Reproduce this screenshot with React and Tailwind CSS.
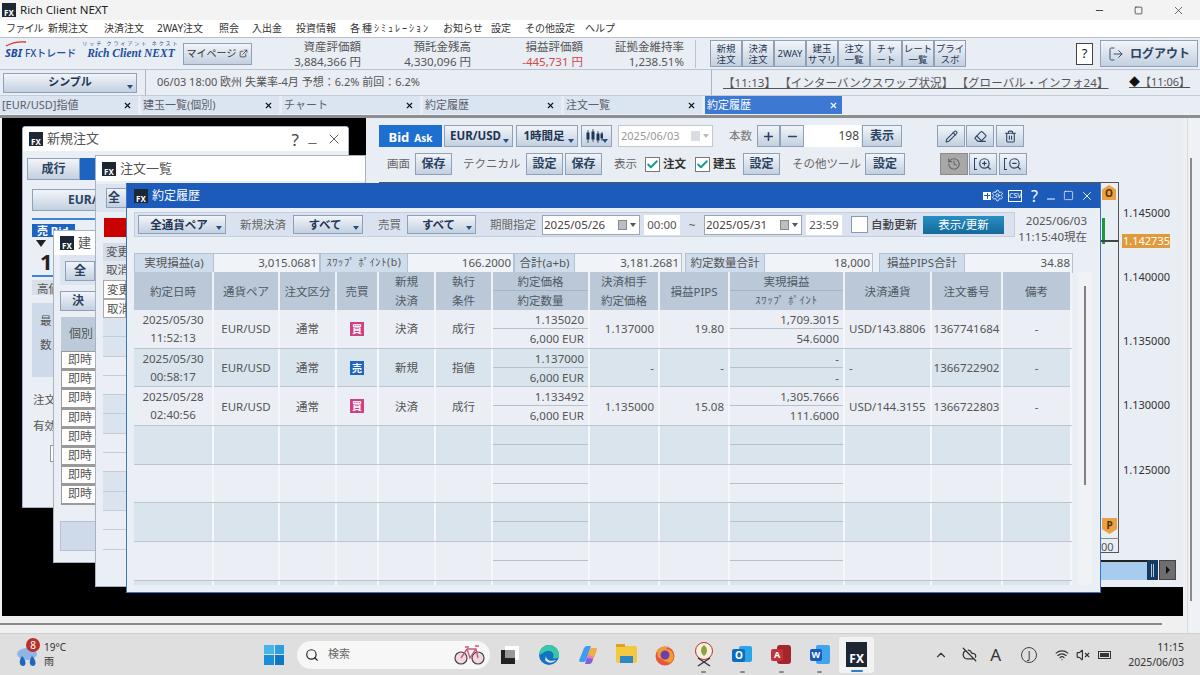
import React from 'react';
import { Search, Wifi, VolumeX, ChevronUp, Pencil, Eraser, Trash2, History, ZoomIn, ZoomOut, CloudOff, LogOut, ExternalLink, Minus, Plus, X, Square, Check, Settings } from 'lucide-react';

const Fx = ({ big }) => (
  <div className={big ? "w-[21px] h-[25px] bg-[#1d2733] text-white flex flex-col items-center justify-end shrink-0 pb-[2px] text-[12px] font-bold leading-none" : "w-[14px] h-[14px] bg-[#1d2733] text-white flex flex-col items-center justify-end shrink-0 text-[8px] font-bold leading-[9px]"}>FX</div>
);

const Btn = ({ className = "", children }) => (
  <div className={"flex items-center justify-center border border-[#8ea1b8] bg-linear-to-b from-[#f2f5f9] to-[#c3d0e0] text-[#2c4463] font-bold text-[12px] shrink-0 overflow-hidden " + className}>{children}</div>
);
const Caret = () => <span className="absolute right-[3px] bottom-[3px] w-0 h-0 border-x-[3px] border-x-transparent border-t-[4px] border-t-[#1f4f8f]" />;
const Drop = ({ className = "", children }) => (
  <div className={"relative flex items-center justify-center border border-[#8ea1b8] bg-linear-to-b from-[#f2f5f9] to-[#c3d0e0] text-[#1f3554] font-bold shrink-0 " + className}>{children}<Caret /></div>
);

const menu = [['ファイル','w-[42px] tracking-[-0.8px]'],['新規注文','w-[56px]'],['決済注文','w-[53px]'],['2WAY注文','w-[62px]'],['照会','w-[33px]'],['入出金','w-[44px]'],['投資情報','w-[54px]'],['各種ｼﾐｭﾚｰｼｮﾝ','w-[93px] tracking-[2px]'],['お知らせ','w-[48px]'],['設定','w-[34px]'],['その他設定','w-[60px]'],['ヘルプ','w-[40px]']];
const quick = [['新規','注文'],['決済','注文'],['2WAY'],['建玉','サマリ'],['注文','一覧'],['チャ','ート'],['レート','一覧'],['プライ','スボ']];
const tabs = ['[EUR/USD]指値','建玉一覧(個別)','チャート','約定履歴','注文一覧'];
const stats = [['資産評価額','3,884,366 円','w-[104px]','text-[#555]'],['預託金残高','4,330,096 円','w-[110px]','text-[#555]'],['損益評価額','-445,731 円','w-[112px]','text-[#d04a4a]'],['証拠金維持率','1,238.51%','w-[101px]','text-[#555]']];

const cols = "grid grid-cols-[80px_66px_57px_42px_57px_57px_97px_70px_70px_115px_87px_71px_69px]";
const rows = [
  ['2025/05/30','11:52:13','EUR/USD','通常','買','決済','成行','1.135020','6,000 EUR','1.137000','19.80','1,709.3015','54.6000','USD/143.8806','1367741684','-'],
  ['2025/05/30','00:58:17','EUR/USD','通常','売','新規','指値','1.137000','6,000 EUR','-','-','-','-','-','1366722902','-'],
  ['2025/05/28','02:40:56','EUR/USD','通常','買','決済','成行','1.133492','6,000 EUR','1.135000','15.08','1,305.7666','111.6000','USD/144.3155','1366722803','-'],
];

const HCell = ({ children }) => <div className="flex items-center justify-center text-center bg-[#bac8d8] border-r-2 border-[#eef1f6] leading-[19px]">{children}</div>;
const HSplit = ({ a, b, small }) => (
  <div className="flex flex-col bg-[#bac8d8] border-r-2 border-[#eef1f6] text-center">
    <div className="h-[19px] leading-[19px] border-b border-[#a5b4c6]">{a}</div>
    <div className={small ? "flex-1 text-[10.5px] tracking-[0.8px] leading-[19px] whitespace-nowrap" : "flex-1 leading-[19px]"}>{b}</div>
  </div>
);
const Cell = ({ children, className = "" }) => <div className={"flex items-center border-r-2 border-[#f5f7fa] " + className}>{children}</div>;
const Split = ({ a, b }) => (
  <div className="flex flex-col border-r-2 border-[#f5f7fa] text-right">
    <div className="h-[19px] leading-[19px] pr-[4px] border-b border-[#b4c0cc]">{a}</div>
    <div className="flex-1 leading-[19px] pr-[4px]">{b}</div>
  </div>
);

const Row = ({ r, i }) => {
  const bg = i % 2 === 0 ? "bg-[#ebeff5]" : "bg-[#d9e4ec]";
  const e = r || Array(16).fill('');
  return (
    <div className={cols + " h-[38.7px] border-b border-[#bcc6d0] " + bg}>
      <Cell className="flex-col justify-center leading-[18px]"><span>{e[0]}</span><span>{e[1]}</span></Cell>
      <Cell className="justify-center">{e[2]}</Cell>
      <Cell className="justify-center">{e[3]}</Cell>
      <Cell className="justify-center">
        {e[4] && <span className={(e[4] === '買' ? "bg-[#cf3f83]" : "bg-[#1f66bd]") + " w-[14px] h-[14px] text-white text-[10px] leading-[14px] text-center font-bold"}>{e[4]}</span>}
      </Cell>
      <Cell className="justify-center">{e[5]}</Cell>
      <Cell className="justify-center">{e[6]}</Cell>
      <Split a={e[7]} b={e[8]} />
      <Cell className="justify-end pr-[4px]">{e[9]}</Cell>
      <Cell className="justify-end pr-[4px]">{e[10]}</Cell>
      <Split a={e[11]} b={e[12]} />
      <Cell className="pl-[4px]">{e[13]}</Cell>
      <Cell className="justify-center">{e[14]}</Cell>
      <Cell className="justify-center">{e[15]}</Cell>
    </div>
  );
};

const Sum = ({ label, value, lw, vw, small }) => (
  <div className="flex h-[20px] border border-[#b4c2d4] shrink-0">
    <div className={lw + " bg-[#cfdcec] border-r border-[#b4c2d4] flex items-center justify-center whitespace-nowrap " + (small ? "text-[10.5px] tracking-[0.6px]" : "")}>{label}</div>
    <div className={vw + " bg-[#f0f3f8] flex items-center justify-end pr-[2px]"}>{value}</div>
  </div>
);

const DateBox = ({ className = "", v }) => (
  <div className={"h-[20px] bg-white border border-[#9aa6b4] flex items-center pl-[1px] text-[#444] shrink-0 " + className}>
    <span>{v}</span>
    <span className="ml-auto w-[9px] h-[10px] bg-[#b9bfc6] border border-[#888]" />
    <span className="mx-[3px] w-0 h-0 border-x-[3px] border-x-transparent border-t-[4px] border-t-[#555]" />
  </div>
);

const Check2 = ({ label }) => (
  <div className="flex items-center gap-[3px] shrink-0 font-bold text-[#333]">
    <span className="w-[15px] h-[15px] bg-white border border-[#777] flex items-center justify-center"><Check size={13} strokeWidth={3.5} className="text-[#139a94]" /></span>{label}
  </div>
);

const IconBtn = ({ className = "", children }) => <Btn className={"w-[28px] h-[22px] " + className}>{children}</Btn>;
const Bracket = () => <span className="w-[3px] h-[12px] border-l border-y border-[#2c4463] mr-[1px]" />;

const Slot = ({ children, className = "" }) => <div className={"w-[38.7px] h-[42px] flex items-center justify-center relative shrink-0 " + className}>{children}</div>;
const Dot = () => <span className="absolute bottom-[3px] w-[5px] h-[2px] rounded bg-[#888]" />;

const Price = ({ top, children }) => <div className={"absolute left-[1123px] text-[11px] leading-none text-[#333] " + top}>{children}</div>;

export default function App() {
  return (
    <div className="relative w-[1200px] h-[675px] overflow-hidden bg-[#f0f0f0] font-['Noto_Sans','Noto_Sans_CJK_JP',sans-serif] text-[11.5px] text-[#555]">
      {/* Title */}
      <div className="h-[20px] bg-[#f3f3f3] flex items-center pl-[2px] text-[#222] text-[11.5px]">
        <Fx /><span className="ml-[4px]">Rich Client NEXT</span>
        <div className="ml-auto flex items-center gap-[29px] pr-[15px] text-[#333]"><Minus size={11} /><Square size={9} /><X size={13} strokeWidth={1.3} /></div>
      </div>
      {/* Menu */}
      <div className="h-[18px] bg-white flex items-center pl-[6px] text-[10px] text-[#333] border-b border-[#b9c0ca]">
        {menu.map(m => <span key={m[0]} className={"whitespace-nowrap shrink-0 " + m[1]}>{m[0]}</span>)}
      </div>
      {/* Header */}
      <div className="h-[32px] bg-[#e9edf4] flex items-center border-b border-[#b9c4d2]">
        <div className="relative flex items-end pl-[5px] w-[183px] h-[20px] shrink-0 self-start mt-[2px] text-[#1b4da0] whitespace-nowrap">
          <span className="text-[11px] leading-[14px] font-bold italic">SBI</span>
          <span className="ml-[3px] text-[10px] leading-[14px] font-medium">FXトレード</span>
          <div className="ml-[6px] flex flex-col items-center">
            <span className="text-[5px] leading-[6px] tracking-[2px]">リッチ クライアント ネクスト</span>
            <span className="text-[11.5px] leading-[14px] font-bold italic font-['Liberation_Serif',serif]">Rich Client NEXT</span>
          </div>
          <svg width="22" height="6" viewBox="0 0 22 6" className="absolute left-[5px] top-[1px]"><path d="M1 5 Q10 0 21 1" fill="none" stroke="#d9322a" strokeWidth="1.4" /></svg>
        </div>
        <Btn className="w-[69px] h-[22px] gap-[3px] text-[10px]! font-normal! text-[#333]! whitespace-nowrap">マイページ<ExternalLink size={9} /></Btn>
        <div className="w-[5px]" />
        {stats.map(s => (
          <div key={s[0]} className={"flex flex-col items-end shrink-0 leading-[15px] " + s[2]}>
            <span>{s[0]}</span><span className={s[3]}>{s[1]}</span>
          </div>
        ))}
        <div className="w-[12px] h-[28px] border-r border-[#b9c4d2]" />
        <div className="flex ml-[14px] h-[27px]">
          {quick.map((q, i) => (
            <Btn key={i} className="w-[32px] flex-col text-[9.5px]! font-normal! leading-[11px] text-[#1f3554]!">{q.map(t => <span key={t} className="whitespace-nowrap">{t}</span>)}</Btn>
          ))}
        </div>
        <div className="ml-[110px] w-[17px] h-[22px] border border-[#444] bg-white text-[#222] text-[13px] flex items-center justify-center">?</div>
        <Btn className="ml-[7px] w-[98px] h-[27px] gap-[6px]"><LogOut size={16} strokeWidth={1.4} />ログアウト</Btn>
      </div>
      {/* Row 2 */}
      <div className="h-[26px] bg-[#e9edf4] flex items-center border-b border-[#c3ccd8]">
        <Drop className="ml-[3px] w-[134px] h-[20px] text-[11px]">シンプル</Drop>
        <div className="ml-[8px] h-[25px] border-r border-[#aab5c3]" />
        <span className="ml-[11px] w-[554px] shrink-0 whitespace-nowrap text-[11px]">06/03 18:00 欧州 失業率-4月 予想：6.2% 前回：6.2%</span>
        <div className="h-[25px] border-r border-[#aab5c3]" />
        <span className="ml-[11px] w-[377px] shrink-0 underline whitespace-pre text-[11.5px] tracking-[0.1px]">【11:13】 【インターバンクスワップ状況】 【グローバル・インフォ24】</span>
        <span className="ml-[29px] underline whitespace-nowrap text-[11px]"><span className="text-[#111]">◆</span>【11:06】</span>
      </div>
      {/* Tabs */}
      <div className="h-[18px] bg-[#e9edf4] flex gap-[3px] text-[11px]">
        {tabs.map((t, i) => (
          <div key={i} className="w-[138px] bg-[#dbe4f1] flex items-center justify-between pl-[2px] pr-[6px] text-[#5a6068]"><span>{t}</span><X size={9} strokeWidth={3} className="text-[#111]" /></div>
        ))}
        <div className="w-[137px] bg-[#3d78d3] flex items-center justify-between pl-[2px] pr-[4px] text-white"><span>約定履歴</span><X size={9} strokeWidth={3} /></div>
      </div>

      {/* Desktop */}
      <div className="absolute left-[2px] top-[118px] w-[1181px] h-[498px] bg-black" />
      <div className="absolute left-[0px] top-[115px] w-[1200px] h-[3px] bg-[#8a8d91]" />
      <div className="absolute left-[1187px] top-[118px] w-[13px] h-[515px] bg-[#eef1f6] border-l border-[#d6dbe2]" />
      <div className="absolute left-[1190px] top-[158px] w-[2px] h-[443px] bg-[#8a8a8a]" />
      <div className="absolute left-0 top-[623px] w-[1162px] h-[2px] bg-[#8a8a8a]" />

      {/* Chart panel */}
      <div className="absolute left-[366px] top-[118px] w-[817px] h-[469px] bg-[#e9edf4]">
        <div className="flex items-center h-[22px] mt-[7px] pl-[13px]">
          <div className="w-[63px] h-[22px] bg-[#1d6fd0] text-white font-bold flex items-baseline justify-center gap-[5px] pt-[3px] text-[13px]">Bid <span className="text-[10px]">Ask</span></div>
          <Drop className="ml-[2px] w-[69px] h-[22px] text-[#1f3554] text-[11.5px]"><span className="-ml-[6px]">EUR/USD</span></Drop>
          <Drop className="ml-[3px] w-[62px] h-[22px] text-[11.5px]"><span className="-ml-[6px]">1時間足</span></Drop>
          <Drop className="ml-[3px] w-[31px] h-[22px]">
            <svg width="17" height="15" viewBox="0 0 17 15" className="-ml-[5px]" fill="#1f3554" stroke="#1f3554"><path d="M2 1v13M7 0v13M12 2v12M16 3v9" strokeWidth="0.8" /><rect x="1" y="4" width="2" height="6" /><rect x="6" y="3" width="2" height="7" /><rect x="11" y="5" width="2" height="6" /><rect x="15" y="5" width="1.5" height="4" /></svg>
          </Drop>
          <div className="ml-[6px] w-[95px] h-[22px] bg-white border border-[#c3c9d1] flex items-center pl-[2px] text-[#999] text-[11px]">2025/06/03<span className="ml-auto w-[9px] h-[10px] bg-[#d9dce0]" /><span className="mx-[3px] w-0 h-0 border-x-[3px] border-x-transparent border-t-[4px] border-t-[#bbb]" /></div>
          <span className="ml-[16px] text-[#777] w-[28px]">本数</span>
          <Btn className="w-[23px] h-[22px]"><Plus size={13} strokeWidth={3} /></Btn>
          <Btn className="w-[24px] h-[22px]"><Minus size={13} strokeWidth={3} /></Btn>
          <div className="w-[57px] h-[22px] bg-white flex items-center justify-end pr-[2px] text-[#444] text-[12px]">198</div>
          <Btn className="ml-[1px] w-[40px] h-[22px]">表示</Btn>
          <IconBtn className="ml-[35px]"><Pencil size={13} /></IconBtn>
          <IconBtn className="ml-[1px]"><Eraser size={13} /></IconBtn>
          <IconBtn className="ml-[2px]"><Trash2 size={13} /></IconBtn>
        </div>
        <div className="flex items-center h-[22px] mt-[6px] pl-[21px] text-[#666]">
          <span className="w-[28px]">画面</span>
          <Btn className="w-[37px] h-[22px]">保存</Btn>
          <span className="ml-[11px] w-[63px] whitespace-nowrap">テクニカル</span>
          <Btn className="w-[37px] h-[22px]">設定</Btn>
          <Btn className="ml-[2px] w-[37px] h-[22px]">保存</Btn>
          <span className="ml-[12px] w-[31px]">表示</span>
          <Check2 label="注文" />
          <div className="w-[9px]" />
          <Check2 label="建玉" />
          <Btn className="ml-[7px] w-[37px] h-[22px]">設定</Btn>
          <span className="ml-[12px] w-[73px] whitespace-nowrap">その他ツール</span>
          <Btn className="w-[40px] h-[22px]">設定</Btn>
          <div className="ml-[35px] w-[28px] h-[22px] bg-[#a8a8a8] border border-[#8b8b8b] flex items-center justify-center text-[#666]"><History size={14} /></div>
          <IconBtn className="ml-[1px]"><Bracket /><ZoomIn size={14} /></IconBtn>
          <IconBtn className="ml-[2px]"><Bracket /><ZoomOut size={14} /></IconBtn>
        </div>
        {/* chart box */}
        <div className="absolute left-[13px] top-[64px] w-[740px] h-[371px] border border-[#555] border-l-0" />
      </div>

      {/* chart overlay items */}
      <div className="absolute left-[1102px] top-[185px] w-[14px] h-[15px] bg-[#e9a144] [clip-path:polygon(50%_0,100%_30%,100%_100%,0_100%,0_30%)] text-[10px] font-bold text-[#5a2f00] text-center leading-[17px]">O</div>
      <div className="absolute left-[1102px] top-[218px] w-[3px] h-[26px] bg-[#1a9a3c]" />
      <div className="absolute left-[1101px] top-[240px] w-[18px] h-[2px] bg-[#444]" />
      <Price top="top-[207px]">1.145000</Price>
      <div className="absolute left-[1122px] top-[234px] w-[48px] h-[14px] bg-[#e09a3c] text-white text-[11px] leading-[14px] pl-[1px]">1.142735</div>
      <Price top="top-[271px]">1.140000</Price>
      <Price top="top-[335px]">1.135000</Price>
      <Price top="top-[399px]">1.130000</Price>
      <Price top="top-[464px]">1.125000</Price>
      <div className="absolute left-[1102px] top-[518px] w-[15px] h-[16px] bg-[#e9a144] [clip-path:polygon(0_0,100%_0,100%_70%,50%_100%,0_70%)] text-[10px] font-bold text-[#5a2f00] text-center leading-[15px]">P</div>
      <div className="absolute left-[1100px] top-[538px] w-[19px] h-[1px] bg-[#888]" />
      <div className="absolute left-[1101px] top-[541px] text-[11px] leading-none">00</div>
      <div className="absolute left-[1100px] top-[560px] w-[48px] h-[20px] bg-[#a6cdee] border-t-2 border-[#222]" />
      <div className="absolute left-[1147px] top-[560px] w-[11px] h-[20px] bg-[#143a63] flex items-center justify-center gap-[1px]"><span className="w-px h-[13px] bg-[#b9c8d8]" /><span className="w-px h-[13px] bg-[#b9c8d8]" /></div>
      <div className="absolute left-[1159px] top-[560px] w-[17px] h-[20px] bg-[#6e6e6e] border border-[#444] flex items-center justify-center"><span className="w-0 h-0 border-y-[4px] border-y-transparent border-l-[4px] border-l-[#111]" /></div>

      {/* 新規注文 window */}
      <div className="absolute left-[22px] top-[126px] w-[327px] h-[382px] bg-[#eaeef5] border border-[#a8b2c0] rounded-t-[3px] overflow-hidden">
        <div className="h-[24px] bg-white flex items-center pl-[6px] pr-[6px] gap-[4px] text-[13px] text-[#555]">
          <Fx /><span>新規注文</span>
          <div className="flex items-center gap-[7px] text-[#444] ml-auto">
            <span className="text-[17px] leading-none">?</span><Minus size={13} strokeWidth={1.5} className="mt-[8px]" /><X size={16} strokeWidth={1.3} />
          </div>
        </div>
        <div className="w-[72px] overflow-hidden">
          <div className="flex mt-[7px] ml-[4px]">
            <Btn className="w-[53px] h-[22px]">成行</Btn><div className="w-[40px] h-[22px] bg-[#1d63c0] shrink-0" />
          </div>
          <Btn className="ml-[9px] mt-[9px] w-[70px] h-[22px] justify-start! pl-[35px]"><span>EUR/</span></Btn>
          <div className="ml-[9px] mt-[7px] w-[70px] h-[2px] bg-[#3b86d6]" />
          <div className="ml-[9px] mt-[4px] w-[43px] h-[13px] bg-[#1d63c0] text-white text-[11px] leading-[13px] pl-[5px] font-bold whitespace-nowrap">売 Bid</div>
          <div className="ml-[13px] mt-[3px] w-0 h-0 border-x-[5px] border-x-transparent border-t-[7px] border-t-[#222]" />
          <div className="ml-[17px] mt-[2px] text-[22px] leading-[24px] font-bold text-[#222]">1.</div>
          <div className="ml-[9px] mt-[2px] w-[70px] h-[2px] bg-[#3b86d6]" />
          <div className="ml-[9px] mt-[3px] w-[60px] h-[15px] bg-[#d8dfe9] pl-[5px]">高値</div>
          <div className="ml-[9px] mt-[8px] w-[60px] h-[74px] bg-[#ced9ea] pl-[8px] pt-[6px] leading-[24px] flex flex-col"><span>最</span><span>数</span></div>
          <div className="ml-[10px] mt-[14px]">注文</div>
          <div className="ml-[10px] mt-[9px]">有効</div>
          <div className="ml-[27px] mt-[10px] w-[20px] h-[17px] bg-white border border-[#8e98a6]" />
        </div>
      </div>

      {/* 建玉 window */}
      <div className="absolute left-[53px] top-[230px] w-[43px] h-[333px] bg-[#eaeef5] border border-[#a8b2c0] border-r-0 overflow-hidden">
        <div className="h-[24px] bg-white flex items-center pl-[6px] gap-[4px] text-[13px] text-[#555] whitespace-nowrap"><Fx /><span>建</span></div>
        <div className="ml-[6px] h-[30px] bg-[#dbe4f0] pt-[6px] pl-[5px]"><Btn className="w-[30px] h-[20px]">全</Btn></div>
        <Btn className="ml-[6px] mt-[6px] w-[36px] h-[20px]">決</Btn>
        <div className="ml-[7px] mt-[6px] h-[34px] bg-[#bccada] flex items-center pl-[8px] text-[12px] whitespace-nowrap">個別</div>
        <div className="ml-[7px] flex flex-col">
          {[0,1,2,3,4,5,6,7].map(i => <div key={i} className="h-[19.2px] bg-white border border-[#9a9a9a] border-b-2 border-r-0 flex items-center pl-[6px] text-[12px] whitespace-nowrap">即時</div>)}
        </div>
        <div className="ml-[6px] mt-[16px] h-[30px] w-[36px] bg-[#ced9ea] border border-[#b4c2d4] border-r-0" />
      </div>

      {/* 注文一覧 window */}
      <div className="absolute left-[95px] top-[155px] w-[271px] h-[432px] bg-[#eaeef5] border border-[#a8b2c0] overflow-hidden">
        <div className="h-[25px] bg-white flex items-center pl-[6px] gap-[4px] text-[13px] text-[#555]"><Fx /><span>注文一覧</span></div>
        <div className="w-[30px] overflow-hidden">
          <div className="h-[28px] mt-[3px] bg-[#dbe4f0] pt-[4px] pl-[10px]"><Btn className="w-[20px] h-[20px] justify-start! pl-[1px] border-r-0">全</Btn></div>
          <div className="ml-[8px] mt-[6px] w-[22px] h-[19px] bg-[#c80000]" />
          <div className="ml-[7px] mt-[6px] flex flex-col">
            <div className="h-[18px] bg-[#d5dde8] pl-[3px] whitespace-nowrap">変更</div>
            <div className="h-[19px] bg-[#e3e8ef] pl-[3px] whitespace-nowrap">取消</div>
            <div className="h-[19px] bg-white border border-[#aaa] pl-[3px] whitespace-nowrap">変更</div>
            <div className="h-[19px] bg-white border border-[#aaa] pl-[3px] whitespace-nowrap">取消</div>
            {[0,1,2,3,4,5,6,7,8,9,10,11].map(i => <div key={i} className={(i % 4 < 2 ? "bg-[#d9e4ec]" : "bg-[#ebeff5]") + " h-[19.3px] border-b border-[#c4ccd6]"} />)}
          </div>
        </div>
      </div>

      {/* 約定履歴 window */}
      <div className="absolute left-[126px] top-[183px] w-[975px] h-[410px] bg-[#eaeef5] border border-[#3e74c0] border-t-0 overflow-hidden">
        <div className="h-[25px] bg-[#1c5bb9] flex items-center pl-[7px] gap-[4px] text-white text-[12px] pr-[6px]">
          <Fx /><span>約定履歴</span>
          <div className="ml-auto flex items-center">
            <span className="w-[8px] h-[8px] grid grid-cols-2 gap-px bg-[#1c5bb9] border border-white"><i className="bg-white" /><i className="bg-white" /><i className="bg-white" /><i className="bg-white" /></span>
            <Settings size={13} strokeWidth={1.6} />
            <span className="ml-[4px] w-[14px] h-[12px] border border-white text-[7px] leading-[10px] text-center">CSV</span>
            <span className="ml-[9px] text-[16px] leading-none">?</span>
            <Minus size={12} className="ml-[7px] mt-[7px]" />
            <Square size={11} strokeWidth={1.5} className="ml-[6px]" />
            <X size={14} strokeWidth={1.5} className="ml-[6px]" />
          </div>
        </div>
        <div className="flex mt-[4px] ml-[7px]">
          <div className="w-[881px] h-[25px] bg-[#d9e2ee] border border-[#c3cfde] flex items-center pl-[3px]">
            <Drop className="w-[88px] h-[19px] text-[11.5px]"><span className="-ml-[6px]">全通貨ペア</span></Drop>
            <span className="ml-[14px] w-[47px] text-[#666] whitespace-nowrap">新規決済</span>
            <Drop className="ml-[6px] w-[70px] h-[19px] text-[11.5px]"><span className="-ml-[6px]">すべて</span></Drop>
            <span className="ml-[15px] w-[24px] text-[#666]">売買</span>
            <Drop className="ml-[5px] w-[69px] h-[19px] text-[11.5px]"><span className="-ml-[6px]">すべて</span></Drop>
            <span className="ml-[14px] w-[49px] text-[#666] whitespace-nowrap">期間指定</span>
            <DateBox className="ml-[3px] w-[98px]" v="2025/05/26" />
            <div className="ml-[4px] w-[36px] h-[20px] bg-white flex items-center justify-center">00:00</div>
            <span className="w-[24px] text-center">~</span>
            <DateBox className="w-[98px]" v="2025/05/31" />
            <div className="ml-[4px] w-[36px] h-[20px] bg-white flex items-center justify-center">23:59</div>
            <div className="ml-[9px] w-[17px] h-[17px] bg-white border border-[#8e98a6]" />
            <span className="ml-[3px] w-[46px] text-[#444] font-medium whitespace-nowrap">自動更新</span>
            <div className="ml-[6px] w-[81px] h-[18px] bg-linear-to-b from-[#2a8ec2] to-[#14699c] text-white flex items-center justify-center">表示/更新</div>
          </div>
          <div className="w-[72px] text-right leading-[16px] pt-[1px] whitespace-nowrap">2025/06/03<br />11:15:40現在</div>
        </div>
        <div className="flex mt-[8px] ml-[7px]">
          <Sum label="実現損益(a)" value="3,015.0681" lw="w-[79px]" vw="w-[105px]" />
          <Sum label="ｽﾜｯﾌﾟ ﾎﾟｲﾝﾄ(b)" value="166.2000" lw="w-[87px]" vw="w-[105px]" small />
          <Sum label="合計(a+b)" value="3,181.2681" lw="w-[60px]" vw="w-[106px]" />
          <div className="w-[3px]" />
          <Sum label="約定数量合計" value="18,000" lw="w-[79px]" vw="w-[107px]" />
          <div className="w-[6px]" />
          <Sum label="損益PIPS合計" value="34.88" lw="w-[85px]" vw="w-[107px]" />
        </div>
        <div className="absolute left-[7px] top-[89px] w-[938px] h-[313px] overflow-hidden">
          <div className={cols + " h-[38px] text-[#505a66]"}>
            <HCell>約定日時</HCell><HCell>通貨ペア</HCell><HCell>注文区分</HCell><HCell>売買</HCell>
            <HCell>新規<br />決済</HCell><HCell>執行<br />条件</HCell>
            <HSplit a="約定価格" b="約定数量" />
            <HCell>決済相手<br />約定価格</HCell><HCell>損益PIPS</HCell>
            <HSplit a="実現損益" b="ｽﾜｯﾌﾟ ﾎﾟｲﾝﾄ" small />
            <HCell>決済通貨</HCell><HCell>注文番号</HCell><HCell>備考</HCell>
          </div>
          {[0,1,2,3,4,5,6,7].map(i => <Row key={i} i={i} r={rows[i]} />)}
        </div>
        <div className="absolute left-[951px] top-[89px] w-[14px] h-[313px] bg-[#f0f2f6]">
          <div className="absolute left-[6px] top-[14px] w-[2px] h-[199px] bg-[#808080]" />
        </div>
      </div>

      {/* Taskbar */}
      <div className="absolute left-0 top-[633px] w-[1200px] h-[42px] bg-[#dfdfdf] border-t border-[#cfcfcf] flex items-center">
        <div className="relative w-[262px] h-[42px] shrink-0 leading-[14px] text-[10px] text-[#333]">
          <svg width="24" height="24" viewBox="0 0 24 24" className="absolute left-[15px] top-[12px]">
            <ellipse cx="12" cy="8" rx="10" ry="6" fill="#8fb4e6" />
            <path d="M7 10 C3 16 5 20 8 20 C11 20 12 15 7 10Z M17 10 C13 16 15 20 18 20 C21 20 22 15 17 10Z" fill="#1f66bd" />
          </svg>
          <div className="absolute left-[26px] top-[4px] w-[14px] h-[14px] rounded-full bg-[#b8302a] text-white text-[10px] leading-[14px] text-center">8</div>
          <div className="absolute left-[44px] top-[6px] leading-[14px]">19°C<br />雨</div>
        </div>
        <Slot className="w-[24px]!">
          <div className="grid grid-cols-2 gap-[1px] w-[20px] h-[20px]">
            <span className="bg-[#48b5e8]" /><span className="bg-[#2ba0e0]" /><span className="bg-[#1a8ed6]" /><span className="bg-[#0e78c4]" />
          </div>
        </Slot>
        <div className="ml-[11px] w-[193px] h-[28px] bg-[#f7f7f7] rounded-full flex items-center pl-[8px] pr-[3px] text-[#666] text-[11px] shrink-0">
          <Search size={14} className="text-[#222]" />
          <span className="ml-[9px]">検索</span>
          <svg width="34" height="22" viewBox="0 0 34 22" className="ml-auto">
            <circle cx="8" cy="14" r="6" fill="#f2d8e0" stroke="#444" strokeWidth="1.2" />
            <circle cx="25" cy="14" r="6" fill="#f2d8e0" stroke="#444" strokeWidth="1.2" />
            <path d="M8 14 L14 5 L23 5 L25 14 M14 5 L17 14 L23 5 M12 3h4 M22 2h4" fill="none" stroke="#c85a7a" strokeWidth="1.4" />
          </svg>
        </div>
        <Slot className="ml-[1px]">
          <div className="relative w-[18px] h-[18px]"><span className="absolute right-0 top-0 w-[14px] h-[14px] bg-white" /><span className="absolute left-0 bottom-0 w-[14px] h-[14px] bg-[#222]" /><span className="absolute left-[4px] top-[4px] w-[10px] h-[8px] bg-[#999]" /></div>
        </Slot>
        <Slot>
          <svg width="22" height="22" viewBox="0 0 22 22">
            <circle cx="11" cy="11" r="10" fill="#1173c4" />
            <path d="M1 11 A10 10 0 0 1 21 11 C21 15 17 15 15 14 C17 9 13 6 9 7 C5 8 3 11 1 11Z" fill="#37c8a8" />
            <path d="M8 12 C8 16 13 18 18 16 C15 20 9 19 7 16 Z" fill="#dfdfdf" />
          </svg>
        </Slot>
        <Slot>
          <svg width="22" height="22" viewBox="0 0 22 22">
            <path d="M3 14 L7 4 Q8 2 10 2 L14 2 L10 14 Q9 18 6 18 L4 18 Q1 18 3 14Z" fill="#3f9cf0" />
            <path d="M19 8 L15 18 Q14 20 12 20 L8 20 L12 8 Q13 4 16 4 L18 4 Q21 4 19 8Z" fill="#e878b8" />
            <path d="M12 8 Q13 4 16 4 L18 4 Q21 4 19 8 L17 13 L11 11Z" fill="#f0b040" />
            <path d="M10 14 L8 20 L12 20 Q14 20 15 18 L16 15Z" fill="#8060e0" />
          </svg>
        </Slot>
        <Slot><div className="relative w-[21px] h-[17px] bg-[#f5c842] rounded-[2px]"><span className="absolute left-0 -top-[2px] w-[9px] h-[3px] bg-[#d9a520]" /><span className="absolute left-[4px] bottom-0 w-[13px] h-[7px] bg-[#2f86c8]" /></div></Slot>
        <Slot>
          <svg width="22" height="22" viewBox="0 0 22 22">
            <circle cx="11" cy="12" r="9.5" fill="#e8553a" />
            <path d="M3 7 Q8 1 16 3 Q13 3 12 5 Q17 5 19 10 Q21 16 16 19 Q9 17 4 13Z" fill="#f59a30" />
            <circle cx="11" cy="11" r="4.5" fill="#6a3fb0" />
          </svg>
        </Slot>
        <Slot><svg width="22" height="26" viewBox="0 0 22 26"><circle cx="11" cy="9" r="8.5" fill="#f5efe0" stroke="#b33" strokeWidth="1" /><path d="M11 3 C7 6 7 11 11 14 C15 11 15 6 11 3Z" fill="#8aa23a" /><path d="M5 24 L17 16 M17 24 L5 16" stroke="#333" strokeWidth="1.4" /></svg><Dot /></Slot>
        <Slot><div className="relative w-[20px] h-[20px]"><span className="absolute right-0 top-[1px] w-[13px] h-[16px] bg-[#2aa5e8] rounded-[2px]" /><span className="absolute left-0 top-[4px] w-[13px] h-[13px] bg-[#0f6cbd] rounded-[2px] text-white text-[10px] font-bold leading-[13px] text-center">O</span></div><Dot /></Slot>
        <Slot><div className="relative w-[20px] h-[20px]"><span className="absolute right-0 top-0 w-[14px] h-[19px] bg-[#a4262c] rounded-[3px]" /><span className="absolute left-0 top-[4px] w-[12px] h-[12px] bg-[#c0333a] rounded-[2px] text-white text-[9px] font-bold leading-[12px] text-center">A</span></div><Dot /></Slot>
        <Slot><div className="relative w-[20px] h-[20px]"><span className="absolute right-0 top-0 w-[14px] h-[19px] bg-[#41a5ee] rounded-[2px]" /><span className="absolute left-0 top-[4px] w-[12px] h-[12px] bg-[#185abd] rounded-[2px] text-white text-[9px] font-bold leading-[12px] text-center">W</span></div><Dot /></Slot>
        <div className="w-[35px] h-[36px] bg-[#f2f2f2] rounded-[3px] flex flex-col items-center justify-center relative shrink-0">
          <Fx big />
          <span className="absolute bottom-[1px] w-[12px] h-[2px] bg-[#2f7fc8] rounded" />
        </div>
        <div className="ml-[60px] flex items-center text-[#333] h-[42px]">
          <ChevronUp size={14} />
          <CloudOff size={15} className="ml-[14px]" />
          <span className="ml-[13px] text-[17px] leading-none">A</span>
          <div className="ml-[20px] w-[16px] h-[16px] rounded-full border border-[#444] text-[10px] leading-[14px] text-center">J</div>
          <Wifi size={14} className="ml-[18px]" />
          <VolumeX size={14} className="ml-[7px]" />
          <div className="ml-[8px] w-[13px] h-[8px] border border-[#333] p-px"><div className="w-full h-full bg-[#333]" /></div>
        </div>
        <div className="ml-auto pr-[16px] text-right leading-[15px] text-[10.5px] text-[#333]">11:15<br />2025/06/03</div>
      </div>
    </div>
  );
}
